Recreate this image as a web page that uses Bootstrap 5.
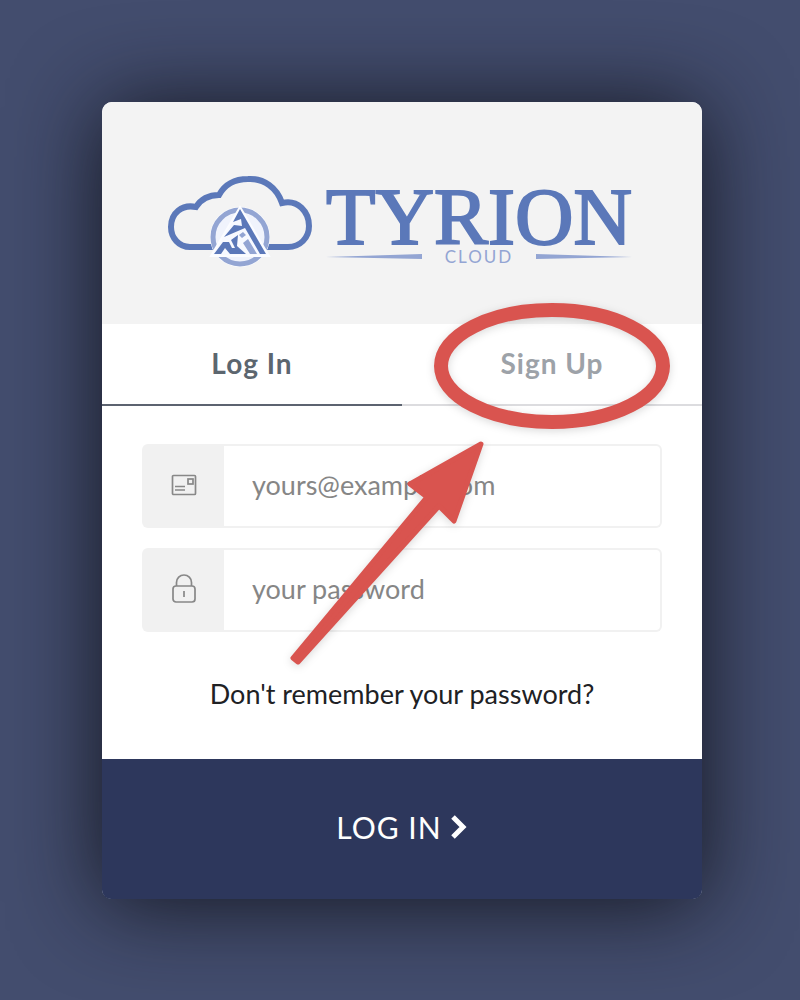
<!DOCTYPE html>
<html lang="en">
<head>
<meta charset="utf-8">
<meta name="viewport" content="width=device-width, initial-scale=1">
<title>Tyrion Cloud – Log In</title>
<link href="https://cdn.jsdelivr.net/npm/bootstrap@5.3.0/dist/css/bootstrap.min.css" rel="stylesheet">
<style>
  body { background: #434d6e; font-family: Lato, "Open Sans", sans-serif; font-size: 27px; line-height: 36px; }
  .page { padding: 102px 98px 101px 102px; }
  .login { border-radius: 10px; background: #fff; box-shadow: 0 4px 88px rgba(14, 15, 22, .9); }
  .brand { background: #f3f3f3; border-radius: 10px 10px 0 0; padding: 69px 68px 49px 60px; gap: 10px; }
  .cloud-logo { width: 152px; height: 104px; flex: none; }
  .brand-text { padding-top: 16px; }
  .brand-name { font: 81px/60px "Liberation Serif", serif; color: #5b78b9; -webkit-text-stroke: 2px #5b78b9; }
  .brand-sub { font-size: 17px; line-height: 20px; letter-spacing: 2px; color: #93a5d3; }
  .brand-rule { width: 96px; height: 6px; }
  .tab-link { border: 0; border-bottom: 2px solid #dcdcdf; background: none; height: 82px; padding: 0 0 2px; color: #9da2a8; font-size: 28px; font-weight: 700; letter-spacing: 1px; }
  .tab-link.active { color: #5c666f; border-color: #5c6370; }
  .fields { padding: 38px 40px 47px; gap: 20px; }
  .field { height: 84px; }
  .field .input-group-text { width: 83px; background: #f1f1f1; border: 0; border-radius: 6px 0 0 6px; }
  .field .form-control { border: 2px solid #f1f1f1; border-left: 0; border-radius: 0 6px 6px 0; padding: 0 28px 2px; font-size: 27px; }
  .field .form-control::placeholder { color: #868686; opacity: 1; }
  .forgot { color: #202124; margin-top: 24px; }
  .submit { background: #2d375c; color: #fff; border: 0; border-radius: 0 0 9px 9px; height: 140px; padding: 0 0 4px; font-size: 30px; letter-spacing: 1px; gap: 8px; }
  .callout { left: 0; top: 0; width: 600px; height: 600px; pointer-events: none; filter: drop-shadow(0 2px 4px rgba(0, 0, 0, .15)); }
</style>
</head>
<body>
<main class="page">
  <form class="login position-relative">
    <header class="brand d-flex justify-content-center">
      <svg class="cloud-logo" viewBox="164 171 152 104" fill="none" aria-hidden="true">
        <path d="M216 247H190C179 247 171 238 171 227C171 213 182 204 196 207C201 199 209 195 219 195C225 184 236 179 248 179C264 178 277 188 282 203C298 199 309 212 309 226C309 238 300 247 288 247H262" stroke="#5b78b9" stroke-width="6"/>
        <circle cx="240" cy="237" r="30" fill="#fbfcff"/>
        <circle cx="240" cy="237" r="27" fill="#f0f3fc" stroke="#93a5d3" stroke-width="5"/>
        <path d="M240 207L211 256H269Z" fill="#f7f9ff" stroke="#fbfcff" stroke-width="2"/>
        <path d="M240 209L266 254H260L245 228L224 237L234 225L242 226L241 219L233 222Z" fill="#5b78b9"/>
        <path d="M214 254L223 242H229L232 248H235L231 240L238 235L237 246L246 254H230L225 248L221 254Z" fill="#5b78b9"/>
        <path d="M239 235L243 232L246 235L242 238ZM243 243L248 239L257 254H250Z" fill="#93a5d3"/>
      </svg>
      <div class="brand-text d-flex flex-column">
        <div class="brand-name">TYRION</div>
        <div class="d-flex justify-content-between align-items-center">
          <svg class="brand-rule" viewBox="0 0 96 6" aria-hidden="true"><path d="M0 3L96 0V5Z" fill="#93a5d3"/></svg>
          <span class="brand-sub">CLOUD</span>
          <svg class="brand-rule" viewBox="0 0 96 6" aria-hidden="true"><path d="M96 3L0 0V5Z" fill="#93a5d3"/></svg>
        </div>
      </div>
    </header>

    <div class="row g-0" role="tablist">
      <button type="button" class="tab-link active col-6" role="tab" aria-selected="true">Log In</button>
      <button type="button" class="tab-link col-6" role="tab" aria-selected="false">Sign Up</button>
    </div>

    <div class="fields d-flex flex-column">
      <div class="input-group field">
        <label class="input-group-text justify-content-center" for="email" aria-label="Email">
          <svg width="26" height="24" viewBox="0 0 26 24" fill="none" stroke="#888" stroke-width="1.700"><rect x="1.500" y="1.500" width="23" height="19" rx="1"/><rect x="17" y="5" width="5" height="5"/><path d="M4 12.500H14M4 16H14"/></svg>
        </label>
        <input type="email" class="form-control" id="email" placeholder="yours@example.com">
      </div>
      <div class="input-group field">
        <label class="input-group-text justify-content-center" for="password" aria-label="Password">
          <svg width="26" height="34" viewBox="0 0 26 34" fill="none" stroke="#888" stroke-width="1.700"><rect x="2" y="13" width="22" height="16" rx="3"/><path d="M5.500 13V9.500A7.500 7.500 0 0 1 20.500 9.500V13M13 18V24"/></svg>
        </label>
        <input type="password" class="form-control" id="password" placeholder="your password">
      </div>
      <a href="#" class="forgot text-center text-decoration-none">Don't remember your password?</a>
    </div>

    <button type="submit" class="submit w-100 d-flex justify-content-center align-items-center">
      <span>LOG IN</span>
      <svg width="18" height="28" viewBox="0 0 18 28" fill="none" stroke="#fff" stroke-width="5" aria-hidden="true"><path d="M3 4L13 14L3 24"/></svg>
    </button>

    <svg class="callout position-absolute" viewBox="0 0 600 600" aria-hidden="true">
      <ellipse cx="450" cy="264" rx="111" ry="56" fill="none" stroke="#d9544f" stroke-width="14"/>
      <path d="M379 342L308 382L325 395L191 556L196 560L337 404L352 419Z" fill="#d9544f" stroke="#d9544f" stroke-width="5" stroke-linejoin="round"/>
    </svg>
  </form>
</main>
<script src="https://cdn.jsdelivr.net/npm/bootstrap@5.3.0/dist/js/bootstrap.bundle.min.js"></script>
</body>
</html>
